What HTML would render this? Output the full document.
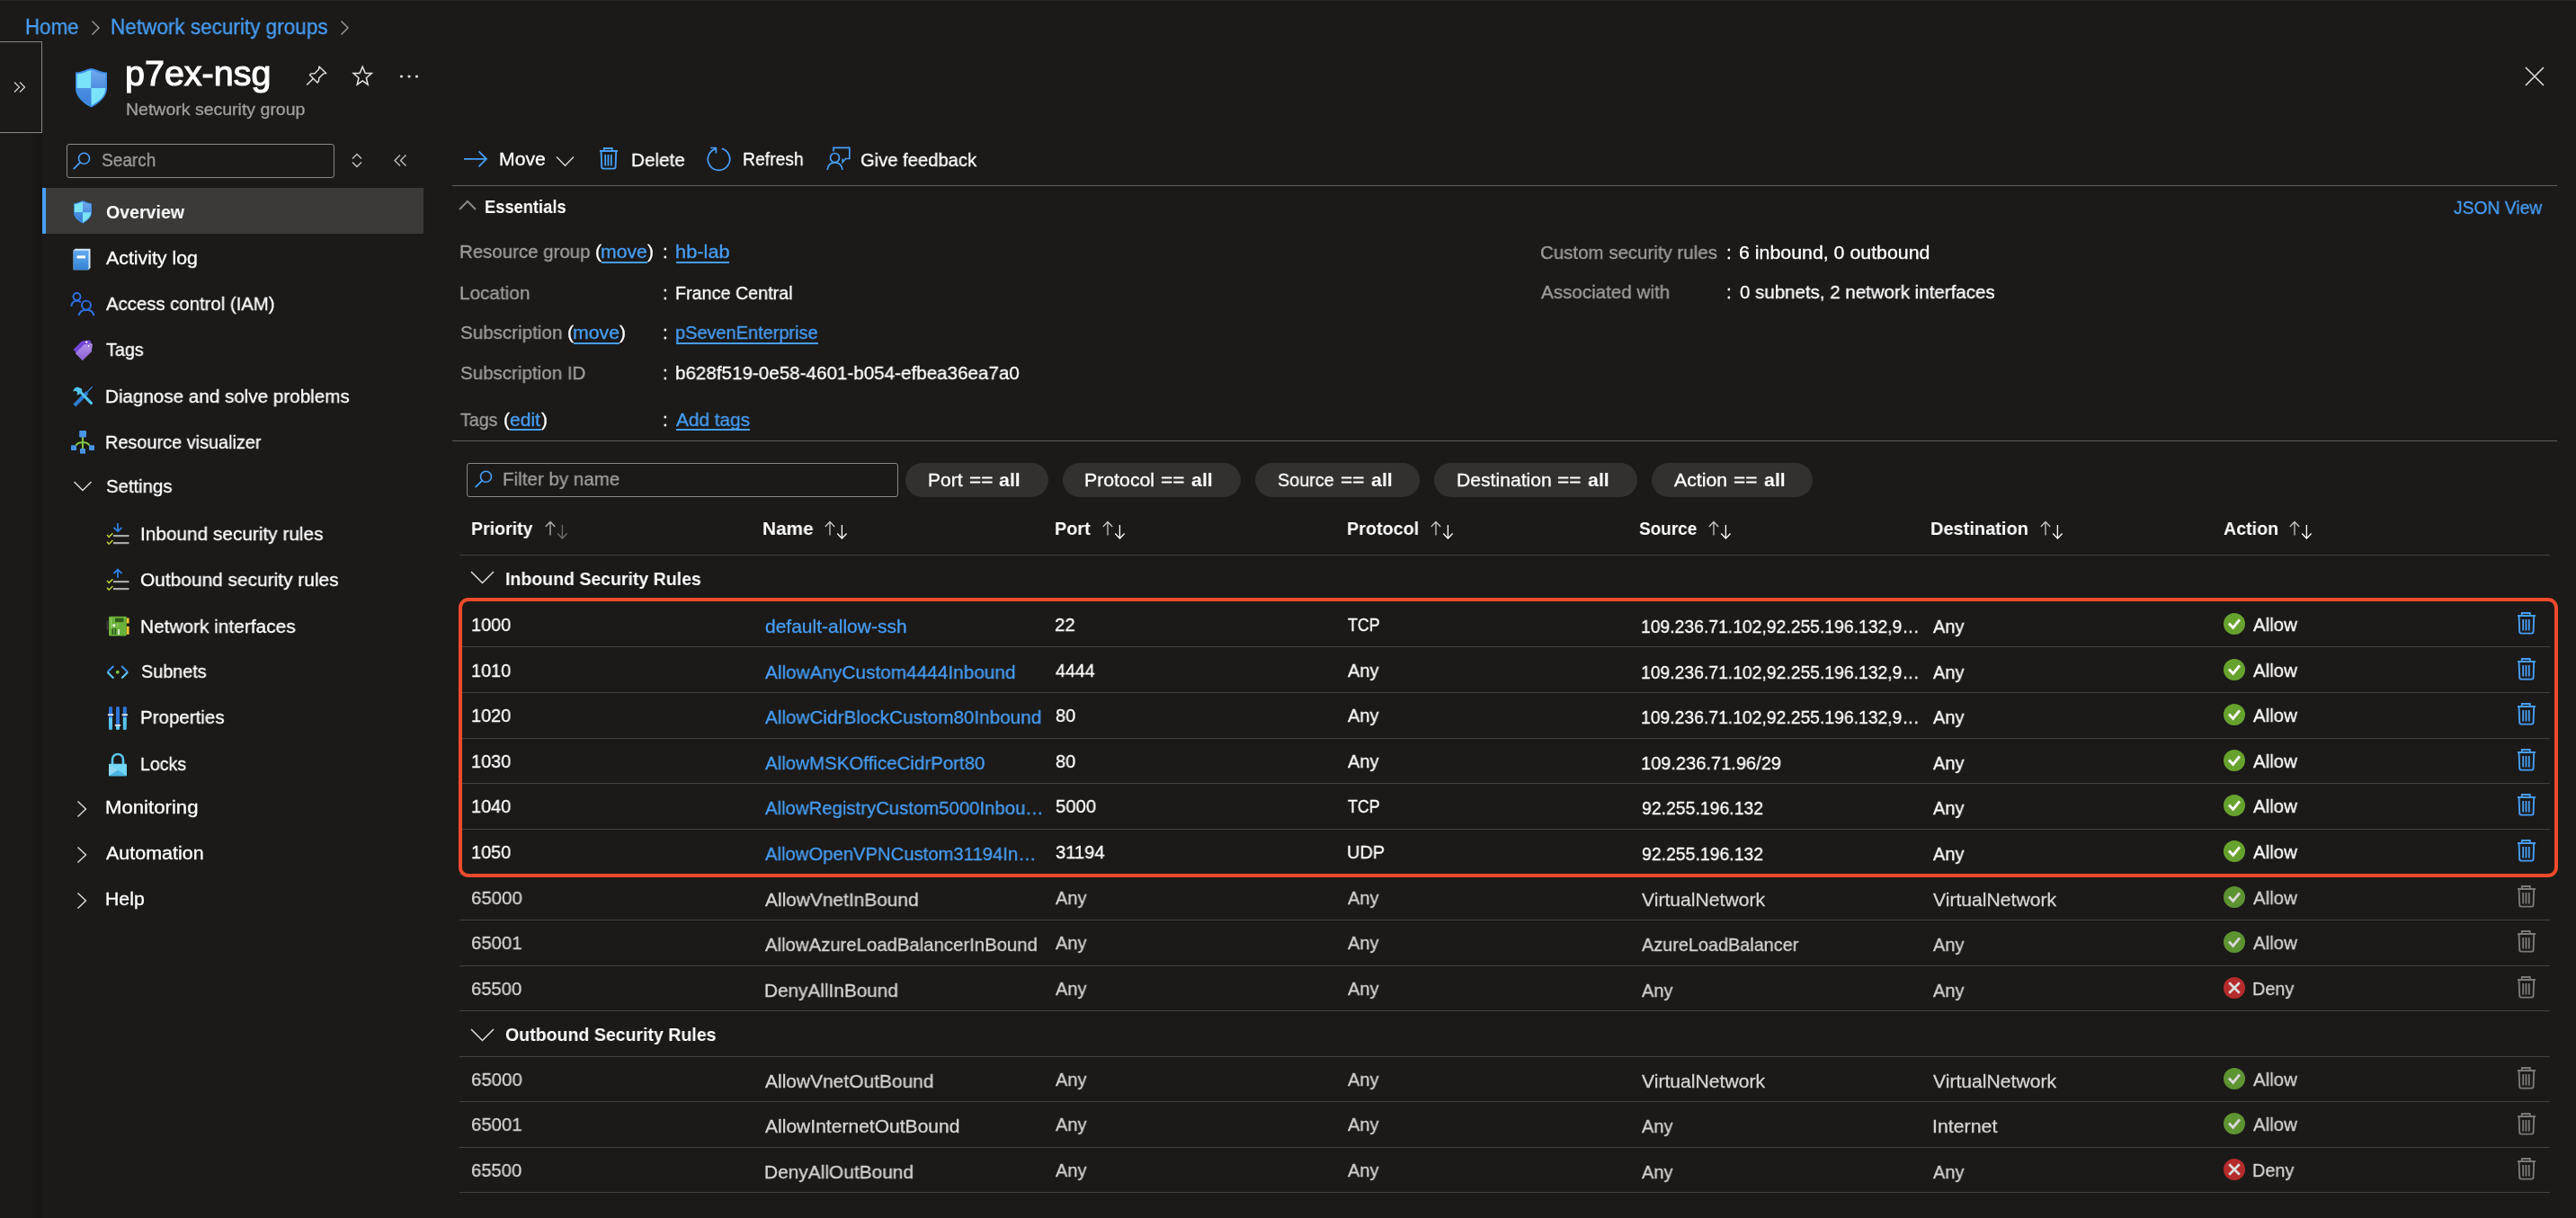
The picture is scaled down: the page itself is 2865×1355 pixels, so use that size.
<!DOCTYPE html>
<html><head><meta charset="utf-8"><style>
html,body{margin:0;padding:0;}
body{width:2865px;height:1355px;background:#1b1a19;overflow:hidden;position:relative;font-family:"Liberation Sans",sans-serif;}
.t{position:absolute;white-space:nowrap;line-height:1;transform-origin:0 0;will-change:transform;}
.t b{font-weight:700;}
.t{-webkit-text-stroke:0.3px currentColor;}
</style></head><body>
<div style="position:absolute;left:0px;top:0px;width:2865px;height:1px;background:#262524;"></div>
<div style="position:absolute;left:0px;top:148px;width:47px;height:1207px;background:linear-gradient(to right,#1b1a19 0px,#1b1a19 29px,#191817 37px,#161514 46px);"></div>
<div style="position:absolute;left:-2px;top:46px;width:47px;height:100px;border:1px solid #8a8886;"></div>
<svg style="position:absolute;left:14px;top:90px" width="16" height="14" viewBox="0 0 16 14"><path d="M2 1.5 L7.5 7 L2 12.5 M8 1.5 L13.5 7 L8 12.5" fill="none" stroke="#d2d0ce" stroke-width="1.3"/></svg>
<svg style="position:absolute;left:100px;top:22px" width="12" height="18" viewBox="0 0 12 18"><path d="M2.5 1.5 L10 9 L2.5 16.5" fill="none" stroke="#a19f9d" stroke-width="1.4"/></svg>
<svg style="position:absolute;left:377px;top:22px" width="12" height="18" viewBox="0 0 12 18"><path d="M2.5 1.5 L10 9 L2.5 16.5" fill="none" stroke="#a19f9d" stroke-width="1.4"/></svg>
<svg style="position:absolute;left:2806px;top:72px" width="26" height="26" viewBox="0 0 26 26"><path d="M3 3 L23 23 M23 3 L3 23" fill="none" stroke="#e1dfdd" stroke-width="1.6"/></svg>
<svg style="position:absolute;left:83px;top:74.5px" width="37" height="45.5" viewBox="0 0 37 45.5"><defs>
<linearGradient id="sgA" x1="0" y1="0" x2="0" y2="1"><stop offset="0" stop-color="#6fa8ee"/><stop offset="1" stop-color="#4f8fe0"/></linearGradient>
<linearGradient id="sgB" x1="0" y1="0" x2="0" y2="1"><stop offset="0" stop-color="#4a8fe2"/><stop offset="1" stop-color="#3a7fd6"/></linearGradient>
</defs>
<path d="M18.5 1 C14 1 11 5 1 5.5 L1 23 C1 33 10 40 18.5 44.5 C27 40 36 33 36 23 L36 5.5 C26 5 23 1 18.5 1 Z" fill="#3d8ee6"/>
<path d="M18.5 3 C14.5 3 11.5 6.8 2.6 7.3 L2.6 23 L18.5 23 Z" fill="#7ae3fa"/>
<path d="M18.5 3 C22.5 3 25.5 6.8 34.4 7.3 L34.4 23 L18.5 23 Z" fill="url(#sgA)"/>
<path d="M2.6 23 C2.8 32 10 38 18.5 42.6 L18.5 23 Z" fill="url(#sgB)"/>
<path d="M34.4 23 C34.2 32 27 38 18.5 42.6 L18.5 23 Z" fill="#7ae3fa"/></svg>
<svg style="position:absolute;left:338px;top:70px" width="28" height="28" viewBox="0 0 28 28"><path d="M6.4 13.3 L8.2 11.9 L11.8 11.9 L16.6 7.1 L16.9 4 L24.7 11.6 L21.7 11.9 L16.8 16.8 L16.4 20.3 L15 22 Z M10.3 17.5 L3.2 24.6" fill="none" stroke="#e8e6e4" stroke-width="1.4" stroke-linejoin="round"/></svg>
<svg style="position:absolute;left:388px;top:70px" width="30" height="28" viewBox="0 0 30 28"><path d="M15.2 4.2 L18.3 11.6 L25.3 11.6 L19.4 16.8 L21.2 24.2 L15.2 19.9 L9.2 24.2 L11 16.8 L5.1 11.6 L12.1 11.6 Z" fill="none" stroke="#e8e6e4" stroke-width="1.5" stroke-linejoin="miter"/></svg>
<svg style="position:absolute;left:443px;top:80px" width="24" height="10" viewBox="0 0 24 10"><circle cx="3.5" cy="5" r="1.6" fill="#e1dfdd"/><circle cx="12" cy="5" r="1.6" fill="#e1dfdd"/><circle cx="20.5" cy="5" r="1.6" fill="#e1dfdd"/></svg>
<div style="position:absolute;left:73.5px;top:159.5px;width:296px;height:36px;border:1.3px solid #8a8886;border-radius:3px;"></div>
<svg style="position:absolute;left:81px;top:168.5px" width="21" height="20" viewBox="0 0 21 20"><circle cx="12.5" cy="7.3" r="6" fill="none" stroke="#479ef5" stroke-width="1.6"/><path d="M8.2 11.6 L1.2 18.6" stroke="#479ef5" stroke-width="1.8" stroke-linecap="round"/></svg>
<svg style="position:absolute;left:390px;top:170px" width="14" height="17" viewBox="0 0 14 17"><path d="M2 6.5 L7 1.5 L12 6.5 M2 10.5 L7 15.5 L12 10.5" fill="none" stroke="#c8c6c4" stroke-width="1.3"/></svg>
<svg style="position:absolute;left:437px;top:171px" width="17" height="15" viewBox="0 0 17 15"><path d="M8 1.5 L2 7.5 L8 13.5 M14.5 1.5 L8.5 7.5 L14.5 13.5" fill="none" stroke="#c8c6c4" stroke-width="1.3"/></svg>
<div style="position:absolute;left:47px;top:209px;width:424px;height:51px;background:#3b3a39;"></div>
<div style="position:absolute;left:47px;top:209px;width:3.5px;height:51px;background:#479ef5;"></div>
<svg style="position:absolute;left:81px;top:222.5px" width="22" height="26" viewBox="0 0 37 45.5"><defs>
<linearGradient id="sgA" x1="0" y1="0" x2="0" y2="1"><stop offset="0" stop-color="#6fa8ee"/><stop offset="1" stop-color="#4f8fe0"/></linearGradient>
<linearGradient id="sgB" x1="0" y1="0" x2="0" y2="1"><stop offset="0" stop-color="#4a8fe2"/><stop offset="1" stop-color="#3a7fd6"/></linearGradient>
</defs>
<path d="M18.5 1 C14 1 11 5 1 5.5 L1 23 C1 33 10 40 18.5 44.5 C27 40 36 33 36 23 L36 5.5 C26 5 23 1 18.5 1 Z" fill="#3d8ee6"/>
<path d="M18.5 3 C14.5 3 11.5 6.8 2.6 7.3 L2.6 23 L18.5 23 Z" fill="#7ae3fa"/>
<path d="M18.5 3 C22.5 3 25.5 6.8 34.4 7.3 L34.4 23 L18.5 23 Z" fill="url(#sgA)"/>
<path d="M2.6 23 C2.8 32 10 38 18.5 42.6 L18.5 23 Z" fill="url(#sgB)"/>
<path d="M34.4 23 C34.2 32 27 38 18.5 42.6 L18.5 23 Z" fill="#7ae3fa"/></svg>
<svg style="position:absolute;left:81px;top:275.5px" width="22" height="25" viewBox="0 0 22 25"><defs><linearGradient id="alg" x1="0" y1="0" x2="0" y2="1"><stop offset="0" stop-color="#62aaf0"/><stop offset="1" stop-color="#3383d6"/></linearGradient></defs>
<path d="M2.5 0.8 L19.5 0.8 L19.5 22 L17.5 24.2 L0.6 24.2 L0.6 2.7 Z" fill="#d9ecfb"/>
<path d="M0.6 2.7 L17.5 2.7 L17.5 24.2 L0.6 24.2 Z" fill="url(#alg)"/>
<rect x="4.6" y="8.4" width="9.4" height="3" fill="#ffffff"/></svg>
<svg style="position:absolute;left:78px;top:325px" width="28" height="28" viewBox="0 0 28 28"><g fill="none" stroke="#2f72e4" stroke-width="1.9">
<circle cx="7.5" cy="5" r="4"/><path d="M1.2 16 C1.8 11.5 4.4 9.6 7.5 9.6 C9.6 9.6 11 10.4 12 11.4"/>
<circle cx="18" cy="14.6" r="5"/><path d="M9.6 26.2 C10.4 21.6 13.6 19.8 18 19.8 C22.4 19.8 25.6 21.6 26.4 26.2"/></g></svg>
<svg style="position:absolute;left:80px;top:377px" width="24" height="26" viewBox="0 0 24 26"><path d="M1.5 12 L11 2.5 L19.5 1.2 L21.5 3.2 L20.5 10 L10 20.5 Z" fill="#7145d6"/>
<path d="M4 16 L13.8 6.2 L21.8 5.2 L22.6 6 L21.8 14 L12 23.8 L11.6 24 Z" fill="#a07be2"/>
<path d="M4 16 L13.8 6.2 L21.8 5.2 L22.6 6 L21.8 14 L12 23.8 Z" fill="url(#tgg)"/>
<defs><linearGradient id="tgg" x1="0" y1="0" x2="0" y2="1"><stop offset="0" stop-color="#b393ea"/><stop offset="1" stop-color="#8a5fd4"/></linearGradient></defs>
<circle cx="16.2" cy="3.6" r="1.5" fill="#fff" stroke="#5a35b8" stroke-width="0.6"/><circle cx="18.5" cy="8" r="1.5" fill="#fff" stroke="#5a35b8" stroke-width="0.6"/></svg>
<svg style="position:absolute;left:80px;top:429px" width="24" height="24" viewBox="0 0 24 24"><path d="M3 20.5 L15.5 8 L16.8 9.3 L4.3 21.8 Z" fill="#2f7dd0" stroke="#2f7dd0" stroke-width="2.4" stroke-linecap="round"/>
<path d="M16 8.2 L22.8 1.2" stroke="#3b8ee0" stroke-width="1.2"/>
<path d="M6.5 1.5 C3.8 1.6 1.6 3.8 1.5 6.5 L4.2 5.8 L6.2 7.8 L5.5 10.5 C7 10.4 8.2 9.7 9 8.8 L20.2 20.6 C20.9 21.3 22 21.3 22.6 20.6 C23.3 19.9 23.3 18.9 22.6 18.2 L11.2 6.8 C11.5 5.8 11.4 4.5 10.8 3.6 Z" fill="#50c3ea"/></svg>
<svg style="position:absolute;left:78px;top:478px" width="28" height="28" viewBox="0 0 28 28"><path d="M14 8 L14 21.5 M6.5 17.5 C8 15 10 14 14 14 C18 14 20 15 21.5 17.5" fill="none" stroke="#86c440" stroke-width="2"/>
<rect x="10.2" y="1" width="7.8" height="7.6" rx="1" fill="#4a94e6"/><rect x="1" y="17.2" width="6" height="5.8" rx="0.8" fill="#4a94e6"/>
<rect x="11" y="21" width="6" height="5.8" rx="0.8" fill="#4a94e6"/><rect x="21" y="17.2" width="6" height="5.8" rx="0.8" fill="#4a94e6"/></svg>
<svg style="position:absolute;left:81px;top:534px" width="22" height="14" viewBox="0 0 22 14"><path d="M1.5 2 L11 11.5 L20.5 2" fill="none" stroke="#e1dfdd" stroke-width="1.4"/></svg>
<svg style="position:absolute;left:117.5px;top:581px" width="27" height="27" viewBox="0 0 27 27"><path d="M1 14 L3.2 16.4 L7.4 12.2 M1 21.8 L3.2 24.2 L7.4 20" fill="none" stroke="#c3d137" stroke-width="1.5"/>
<rect x="8" y="14" width="17.5" height="2.2" fill="#a8a8a8"/><rect x="8" y="22" width="17.5" height="2.2" fill="#a8a8a8"/><path d="M13 1 L13 10 M8.5 5.8 L13 10.2 L17.5 5.8" fill="none" stroke="#2f7fe0" stroke-width="1.8"/></svg>
<svg style="position:absolute;left:117.5px;top:632px" width="27" height="27" viewBox="0 0 27 27"><path d="M1 14 L3.2 16.4 L7.4 12.2 M1 21.8 L3.2 24.2 L7.4 20" fill="none" stroke="#c3d137" stroke-width="1.5"/>
<rect x="8" y="14" width="17.5" height="2.2" fill="#a8a8a8"/><rect x="8" y="22" width="17.5" height="2.2" fill="#a8a8a8"/><path d="M13 10.8 L13 1.8 M8.5 6 L13 1.5 L17.5 6" fill="none" stroke="#2f7fe0" stroke-width="1.8"/></svg>
<svg style="position:absolute;left:118px;top:685px" width="26" height="24" viewBox="0 0 26 24"><rect x="0.5" y="5.5" width="2" height="10" fill="#3a3a3a"/>
<rect x="3" y="0.8" width="19.8" height="21.6" rx="1.3" fill="#6bb23c"/>
<rect x="10" y="2.6" width="9.5" height="4.5" fill="#2f5e1c"/>
<path d="M5.5 3 L5.5 13 L8 15.5 M13 8 L13 12" stroke="#a9db6e" stroke-width="0.9" fill="none"/>
<circle cx="8.8" cy="10.8" r="1.7" fill="#e8f5d8"/>
<rect x="6.5" y="14" width="1.8" height="7" fill="#2f5e1c"/><rect x="9.5" y="14" width="1.8" height="7" fill="#2f5e1c"/>
<rect x="13.3" y="15" width="1.6" height="6" fill="#f0f0f0"/>
<rect x="22.8" y="2.5" width="2.8" height="6" fill="#f2c230"/><rect x="22.8" y="11.8" width="2.8" height="9" fill="#f2c230"/></svg>
<svg style="position:absolute;left:118px;top:740px" width="26" height="16" viewBox="0 0 26 16"><path d="M8.3 1 L1.5 7.8" stroke="#3b8fe6" stroke-width="2.1" fill="none"/><path d="M1.5 7.8 L8.3 14.6" stroke="#5ccaf2" stroke-width="2.1" fill="none"/>
<path d="M17.3 1 L24.1 7.8" stroke="#3b8fe6" stroke-width="2.1" fill="none"/><path d="M24.1 7.8 L17.3 14.6" stroke="#5ccaf2" stroke-width="2.1" fill="none"/>
<circle cx="12.8" cy="7.8" r="2" fill="#7bc142"/></svg>
<svg style="position:absolute;left:119px;top:785px" width="24" height="28" viewBox="0 0 24 28"><defs><linearGradient id="pbg" x1="0" y1="0" x2="0" y2="1"><stop offset="0" stop-color="#2e74d6"/><stop offset="0.45" stop-color="#2e74d6"/><stop offset="0.5" stop-color="#62cdf4"/><stop offset="1" stop-color="#4db8e8"/></linearGradient>
<linearGradient id="pbg2" x1="0" y1="0" x2="0" y2="1"><stop offset="0" stop-color="#2e74d6"/><stop offset="0.82" stop-color="#2e74d6"/><stop offset="0.86" stop-color="#62cdf4"/><stop offset="1" stop-color="#4db8e8"/></linearGradient></defs>
<rect x="2" y="1" width="4" height="26" rx="1.5" fill="url(#pbg)"/><rect x="10" y="1" width="4" height="26" rx="1.5" fill="url(#pbg2)"/><rect x="17.8" y="1" width="4" height="26" rx="1.5" fill="url(#pbg)"/>
<rect x="0.8" y="9.3" width="6.4" height="1.8" fill="#e6e6e6"/><rect x="16.6" y="9.3" width="6.4" height="1.8" fill="#e6e6e6"/><rect x="8.8" y="21" width="6.4" height="1.8" fill="#e6e6e6"/></svg>
<svg style="position:absolute;left:120px;top:837px" width="22" height="27" viewBox="0 0 22 27"><path d="M5 13 L5 8 C5 4.2 7.6 2 11 2 C14.4 2 17 4.2 17 8 L17 13" fill="none" stroke="#5bc6ee" stroke-width="2.6"/>
<rect x="1" y="12.8" width="20" height="13.4" rx="1" fill="#72d6f5"/>
<path d="M1 26.2 L11 19.5 L21 26.2 Z" fill="#4bb4e2"/><path d="M1 12.8 L11 19.5 L1 26.2 Z" fill="#8ed7f0"/></svg>
<svg style="position:absolute;left:84px;top:890px" width="14" height="20" viewBox="0 0 14 20"><path d="M2.5 1.5 L11.5 10 L2.5 18.5" fill="none" stroke="#e1dfdd" stroke-width="1.4"/></svg>
<svg style="position:absolute;left:84px;top:941px" width="14" height="20" viewBox="0 0 14 20"><path d="M2.5 1.5 L11.5 10 L2.5 18.5" fill="none" stroke="#e1dfdd" stroke-width="1.4"/></svg>
<svg style="position:absolute;left:84px;top:992px" width="14" height="20" viewBox="0 0 14 20"><path d="M2.5 1.5 L11.5 10 L2.5 18.5" fill="none" stroke="#e1dfdd" stroke-width="1.4"/></svg>
<svg style="position:absolute;left:514px;top:166px" width="30" height="22" viewBox="0 0 30 22"><path d="M2 10.8 L27 10.8 M18.5 2.3 L27 10.8 L18.5 19.3" fill="none" stroke="#479ef5" stroke-width="1.8"/></svg>
<svg style="position:absolute;left:617px;top:172px" width="24" height="15" viewBox="0 0 24 15"><path d="M2 2.5 L11.5 12.3 L21 2.5" fill="none" stroke="#e1dfdd" stroke-width="1.3"/></svg>
<svg style="position:absolute;left:666px;top:164px" width="22" height="26" viewBox="0 0 22 26"><path d="M1 4 L21 4 M5.8 3.2 L5.8 1 L14.8 1 L14.8 3.2" fill="none" stroke="#479ef5" stroke-width="1.8"/><path d="M2.6 4.2 L3.2 21.5 C3.2 22.8 4 23.6 5.2 23.6 L16.6 23.6 C17.8 23.6 18.6 22.8 18.6 21.5 L19.2 4.2" fill="none" stroke="#479ef5" stroke-width="1.9"/><path d="M7.2 8 L7.2 20.5 M10.5 8 L10.5 20.5 M13.8 8 L13.8 20.5" stroke="#479ef5" stroke-width="1.8"/></svg>
<svg style="position:absolute;left:785px;top:162px" width="30" height="30" viewBox="0 0 30 30"><path d="M17.8 3.4 A12.2 12.2 0 1 1 11.6 3.3" fill="none" stroke="#479ef5" stroke-width="1.7"/><path d="M5.2 2.5 L11.4 2.5 L11.4 8.6" fill="none" stroke="#479ef5" stroke-width="1.7"/></svg>
<svg style="position:absolute;left:918px;top:163px" width="30" height="28" viewBox="0 0 30 28"><circle cx="10.5" cy="12.5" r="5" fill="none" stroke="#479ef5" stroke-width="1.7"/><path d="M2.2 26 C2.8 20.5 6 17.8 10.5 17.8 C15 17.8 18.2 20.5 19 26" fill="none" stroke="#479ef5" stroke-width="1.7"/><path d="M9 5.5 L9 1.3 L26.8 1.3 L26.8 13.5 L22.5 13.5 L19.2 17.5 L19.2 13.8" fill="none" stroke="#479ef5" stroke-width="1.7"/></svg>
<div style="position:absolute;left:503px;top:206px;width:2341px;height:1.3px;background:#5f5e5d;"></div>
<svg style="position:absolute;left:509px;top:221px" width="24" height="14" viewBox="0 0 24 14"><path d="M2 12 L11 3 L20 12" fill="none" stroke="#8a8886" stroke-width="2"/></svg>
<div style="position:absolute;left:669px;top:290.5px;width:51px;height:2px;background:#479ef5;"></div>
<div style="position:absolute;left:751.5px;top:290.5px;width:59.5px;height:2px;background:#479ef5;"></div>
<div style="position:absolute;left:638px;top:380.5px;width:51px;height:2px;background:#479ef5;"></div>
<div style="position:absolute;left:752px;top:380.5px;width:157.5px;height:2px;background:#479ef5;"></div>
<div style="position:absolute;left:567px;top:477.2px;width:35px;height:2px;background:#479ef5;"></div>
<div style="position:absolute;left:751.5px;top:477.2px;width:82px;height:2px;background:#479ef5;"></div>
<div style="position:absolute;left:503px;top:490px;width:2341px;height:1.3px;background:#5f5e5d;"></div>
<div style="position:absolute;left:519px;top:515px;width:478px;height:36px;border:1.3px solid #8a8886;border-radius:3px;"></div>
<svg style="position:absolute;left:528px;top:523px" width="21" height="21" viewBox="0 0 21 21"><circle cx="12.5" cy="7.3" r="6" fill="none" stroke="#479ef5" stroke-width="1.6"/><path d="M8.2 11.6 L1.2 18.6" stroke="#479ef5" stroke-width="1.8" stroke-linecap="round"/></svg>
<div style="position:absolute;left:1007px;top:515px;width:159px;height:38px;border-radius:19px;background:#323130;"></div>
<div style="position:absolute;left:1182.2px;top:515px;width:198.0px;height:38px;border-radius:19px;background:#323130;"></div>
<div style="position:absolute;left:1396px;top:515px;width:183px;height:38px;border-radius:19px;background:#323130;"></div>
<div style="position:absolute;left:1595px;top:515px;width:226px;height:38px;border-radius:19px;background:#323130;"></div>
<div style="position:absolute;left:1837px;top:515px;width:179px;height:38px;border-radius:19px;background:#323130;"></div>
<svg style="position:absolute;left:605.8px;top:579px" width="28" height="22" viewBox="0 0 28 22"><path d="M6 16.5 L6 1.5 M0.8 7 L6 1.5 L11.2 7" fill="none" stroke="#b8b6b4" stroke-width="1.3"/><path d="M19.4 5 L19.4 20 M14.2 14.5 L19.4 20 L24.6 14.5" fill="none" stroke="#6e6d6c" stroke-width="1.3"/></svg>
<svg style="position:absolute;left:917.4px;top:579px" width="28" height="22" viewBox="0 0 28 22"><path d="M6 16.5 L6 1.5 M0.8 7 L6 1.5 L11.2 7" fill="none" stroke="#c8c6c4" stroke-width="1.3"/><path d="M19.4 5 L19.4 20 M14.2 14.5 L19.4 20 L24.6 14.5" fill="none" stroke="#ffffff" stroke-width="1.3"/></svg>
<svg style="position:absolute;left:1225.9px;top:579px" width="28" height="22" viewBox="0 0 28 22"><path d="M6 16.5 L6 1.5 M0.8 7 L6 1.5 L11.2 7" fill="none" stroke="#c8c6c4" stroke-width="1.3"/><path d="M19.4 5 L19.4 20 M14.2 14.5 L19.4 20 L24.6 14.5" fill="none" stroke="#ffffff" stroke-width="1.3"/></svg>
<svg style="position:absolute;left:1590.5px;top:579px" width="28" height="22" viewBox="0 0 28 22"><path d="M6 16.5 L6 1.5 M0.8 7 L6 1.5 L11.2 7" fill="none" stroke="#c8c6c4" stroke-width="1.3"/><path d="M19.4 5 L19.4 20 M14.2 14.5 L19.4 20 L24.6 14.5" fill="none" stroke="#ffffff" stroke-width="1.3"/></svg>
<svg style="position:absolute;left:1900.2px;top:579px" width="28" height="22" viewBox="0 0 28 22"><path d="M6 16.5 L6 1.5 M0.8 7 L6 1.5 L11.2 7" fill="none" stroke="#c8c6c4" stroke-width="1.3"/><path d="M19.4 5 L19.4 20 M14.2 14.5 L19.4 20 L24.6 14.5" fill="none" stroke="#ffffff" stroke-width="1.3"/></svg>
<svg style="position:absolute;left:2268.6px;top:579px" width="28" height="22" viewBox="0 0 28 22"><path d="M6 16.5 L6 1.5 M0.8 7 L6 1.5 L11.2 7" fill="none" stroke="#c8c6c4" stroke-width="1.3"/><path d="M19.4 5 L19.4 20 M14.2 14.5 L19.4 20 L24.6 14.5" fill="none" stroke="#ffffff" stroke-width="1.3"/></svg>
<svg style="position:absolute;left:2546.4px;top:579px" width="28" height="22" viewBox="0 0 28 22"><path d="M6 16.5 L6 1.5 M0.8 7 L6 1.5 L11.2 7" fill="none" stroke="#c8c6c4" stroke-width="1.3"/><path d="M19.4 5 L19.4 20 M14.2 14.5 L19.4 20 L24.6 14.5" fill="none" stroke="#ffffff" stroke-width="1.3"/></svg>
<div style="position:absolute;left:511px;top:617px;width:2325px;height:1px;background:#434241;"></div>
<svg style="position:absolute;left:522px;top:634px" width="30" height="18" viewBox="0 0 30 18"><path d="M2 2 L14.5 14.5 L27 2" fill="none" stroke="#e1dfdd" stroke-width="1.5"/></svg>
<svg style="position:absolute;left:2473px;top:682.0px" width="24" height="24" viewBox="0 0 24 24"><circle cx="12" cy="12" r="12" fill="#68a22e"/><path d="M6 11.6 L10.6 16.4 L17.9 7.4" fill="none" stroke="#ffffff" stroke-width="2.9"/></svg>
<svg style="position:absolute;left:2799px;top:681.1px" width="22" height="26" viewBox="0 0 22 26"><path d="M1 4 L21 4 M5.8 3.2 L5.8 1 L14.8 1 L14.8 3.2" fill="none" stroke="#479ef5" stroke-width="1.8"/><path d="M2.6 4.2 L3.2 21.5 C3.2 22.8 4 23.6 5.2 23.6 L16.6 23.6 C17.8 23.6 18.6 22.8 18.6 21.5 L19.2 4.2" fill="none" stroke="#479ef5" stroke-width="1.9"/><path d="M7.2 8 L7.2 20.5 M10.5 8 L10.5 20.5 M13.8 8 L13.8 20.5" stroke="#479ef5" stroke-width="1.8"/></svg>
<div style="position:absolute;left:513px;top:719px;width:2323px;height:1px;background:#434241;"></div>
<svg style="position:absolute;left:2473px;top:732.6px" width="24" height="24" viewBox="0 0 24 24"><circle cx="12" cy="12" r="12" fill="#68a22e"/><path d="M6 11.6 L10.6 16.4 L17.9 7.4" fill="none" stroke="#ffffff" stroke-width="2.9"/></svg>
<svg style="position:absolute;left:2799px;top:731.7px" width="22" height="26" viewBox="0 0 22 26"><path d="M1 4 L21 4 M5.8 3.2 L5.8 1 L14.8 1 L14.8 3.2" fill="none" stroke="#479ef5" stroke-width="1.8"/><path d="M2.6 4.2 L3.2 21.5 C3.2 22.8 4 23.6 5.2 23.6 L16.6 23.6 C17.8 23.6 18.6 22.8 18.6 21.5 L19.2 4.2" fill="none" stroke="#479ef5" stroke-width="1.9"/><path d="M7.2 8 L7.2 20.5 M10.5 8 L10.5 20.5 M13.8 8 L13.8 20.5" stroke="#479ef5" stroke-width="1.8"/></svg>
<div style="position:absolute;left:513px;top:770px;width:2323px;height:1px;background:#434241;"></div>
<svg style="position:absolute;left:2473px;top:783.2px" width="24" height="24" viewBox="0 0 24 24"><circle cx="12" cy="12" r="12" fill="#68a22e"/><path d="M6 11.6 L10.6 16.4 L17.9 7.4" fill="none" stroke="#ffffff" stroke-width="2.9"/></svg>
<svg style="position:absolute;left:2799px;top:782.3px" width="22" height="26" viewBox="0 0 22 26"><path d="M1 4 L21 4 M5.8 3.2 L5.8 1 L14.8 1 L14.8 3.2" fill="none" stroke="#479ef5" stroke-width="1.8"/><path d="M2.6 4.2 L3.2 21.5 C3.2 22.8 4 23.6 5.2 23.6 L16.6 23.6 C17.8 23.6 18.6 22.8 18.6 21.5 L19.2 4.2" fill="none" stroke="#479ef5" stroke-width="1.9"/><path d="M7.2 8 L7.2 20.5 M10.5 8 L10.5 20.5 M13.8 8 L13.8 20.5" stroke="#479ef5" stroke-width="1.8"/></svg>
<div style="position:absolute;left:513px;top:821px;width:2323px;height:1px;background:#434241;"></div>
<svg style="position:absolute;left:2473px;top:833.7px" width="24" height="24" viewBox="0 0 24 24"><circle cx="12" cy="12" r="12" fill="#68a22e"/><path d="M6 11.6 L10.6 16.4 L17.9 7.4" fill="none" stroke="#ffffff" stroke-width="2.9"/></svg>
<svg style="position:absolute;left:2799px;top:832.8px" width="22" height="26" viewBox="0 0 22 26"><path d="M1 4 L21 4 M5.8 3.2 L5.8 1 L14.8 1 L14.8 3.2" fill="none" stroke="#479ef5" stroke-width="1.8"/><path d="M2.6 4.2 L3.2 21.5 C3.2 22.8 4 23.6 5.2 23.6 L16.6 23.6 C17.8 23.6 18.6 22.8 18.6 21.5 L19.2 4.2" fill="none" stroke="#479ef5" stroke-width="1.9"/><path d="M7.2 8 L7.2 20.5 M10.5 8 L10.5 20.5 M13.8 8 L13.8 20.5" stroke="#479ef5" stroke-width="1.8"/></svg>
<div style="position:absolute;left:513px;top:871px;width:2323px;height:1px;background:#434241;"></div>
<svg style="position:absolute;left:2473px;top:884.3px" width="24" height="24" viewBox="0 0 24 24"><circle cx="12" cy="12" r="12" fill="#68a22e"/><path d="M6 11.6 L10.6 16.4 L17.9 7.4" fill="none" stroke="#ffffff" stroke-width="2.9"/></svg>
<svg style="position:absolute;left:2799px;top:883.4px" width="22" height="26" viewBox="0 0 22 26"><path d="M1 4 L21 4 M5.8 3.2 L5.8 1 L14.8 1 L14.8 3.2" fill="none" stroke="#479ef5" stroke-width="1.8"/><path d="M2.6 4.2 L3.2 21.5 C3.2 22.8 4 23.6 5.2 23.6 L16.6 23.6 C17.8 23.6 18.6 22.8 18.6 21.5 L19.2 4.2" fill="none" stroke="#479ef5" stroke-width="1.9"/><path d="M7.2 8 L7.2 20.5 M10.5 8 L10.5 20.5 M13.8 8 L13.8 20.5" stroke="#479ef5" stroke-width="1.8"/></svg>
<div style="position:absolute;left:513px;top:922px;width:2323px;height:1px;background:#434241;"></div>
<svg style="position:absolute;left:2473px;top:934.9px" width="24" height="24" viewBox="0 0 24 24"><circle cx="12" cy="12" r="12" fill="#68a22e"/><path d="M6 11.6 L10.6 16.4 L17.9 7.4" fill="none" stroke="#ffffff" stroke-width="2.9"/></svg>
<svg style="position:absolute;left:2799px;top:934.0px" width="22" height="26" viewBox="0 0 22 26"><path d="M1 4 L21 4 M5.8 3.2 L5.8 1 L14.8 1 L14.8 3.2" fill="none" stroke="#479ef5" stroke-width="1.8"/><path d="M2.6 4.2 L3.2 21.5 C3.2 22.8 4 23.6 5.2 23.6 L16.6 23.6 C17.8 23.6 18.6 22.8 18.6 21.5 L19.2 4.2" fill="none" stroke="#479ef5" stroke-width="1.9"/><path d="M7.2 8 L7.2 20.5 M10.5 8 L10.5 20.5 M13.8 8 L13.8 20.5" stroke="#479ef5" stroke-width="1.8"/></svg>
<div style="position:absolute;left:511px;top:972px;width:2325px;height:1px;background:#434241;"></div>
<svg style="position:absolute;left:2473px;top:985.5px" width="24" height="24" viewBox="0 0 24 24"><circle cx="12" cy="12" r="12" fill="#5e9332"/><path d="M6 11.6 L10.6 16.4 L17.9 7.4" fill="none" stroke="#d8d8d8" stroke-width="2.9"/></svg>
<svg style="position:absolute;left:2799px;top:984.6px" width="22" height="26" viewBox="0 0 22 26"><path d="M1 4 L21 4 M5.8 3.2 L5.8 1 L14.8 1 L14.8 3.2" fill="none" stroke="#7a7978" stroke-width="1.8"/><path d="M2.6 4.2 L3.2 21.5 C3.2 22.8 4 23.6 5.2 23.6 L16.6 23.6 C17.8 23.6 18.6 22.8 18.6 21.5 L19.2 4.2" fill="none" stroke="#7a7978" stroke-width="1.9"/><path d="M7.2 8 L7.2 20.5 M10.5 8 L10.5 20.5 M13.8 8 L13.8 20.5" stroke="#7a7978" stroke-width="1.8"/></svg>
<div style="position:absolute;left:511px;top:1023px;width:2325px;height:1px;background:#434241;"></div>
<svg style="position:absolute;left:2473px;top:1036.1px" width="24" height="24" viewBox="0 0 24 24"><circle cx="12" cy="12" r="12" fill="#5e9332"/><path d="M6 11.6 L10.6 16.4 L17.9 7.4" fill="none" stroke="#d8d8d8" stroke-width="2.9"/></svg>
<svg style="position:absolute;left:2799px;top:1035.2px" width="22" height="26" viewBox="0 0 22 26"><path d="M1 4 L21 4 M5.8 3.2 L5.8 1 L14.8 1 L14.8 3.2" fill="none" stroke="#7a7978" stroke-width="1.8"/><path d="M2.6 4.2 L3.2 21.5 C3.2 22.8 4 23.6 5.2 23.6 L16.6 23.6 C17.8 23.6 18.6 22.8 18.6 21.5 L19.2 4.2" fill="none" stroke="#7a7978" stroke-width="1.9"/><path d="M7.2 8 L7.2 20.5 M10.5 8 L10.5 20.5 M13.8 8 L13.8 20.5" stroke="#7a7978" stroke-width="1.8"/></svg>
<div style="position:absolute;left:511px;top:1074px;width:2325px;height:1px;background:#434241;"></div>
<svg style="position:absolute;left:2473px;top:1086.6px" width="24" height="24" viewBox="0 0 24 24"><circle cx="12" cy="12" r="12" fill="#b52b2b"/><path d="M6.2 6.2 L17.8 17.8 M17.8 6.2 L6.2 17.8" fill="none" stroke="#dcdcdc" stroke-width="2.7"/></svg>
<svg style="position:absolute;left:2799px;top:1085.7px" width="22" height="26" viewBox="0 0 22 26"><path d="M1 4 L21 4 M5.8 3.2 L5.8 1 L14.8 1 L14.8 3.2" fill="none" stroke="#7a7978" stroke-width="1.8"/><path d="M2.6 4.2 L3.2 21.5 C3.2 22.8 4 23.6 5.2 23.6 L16.6 23.6 C17.8 23.6 18.6 22.8 18.6 21.5 L19.2 4.2" fill="none" stroke="#7a7978" stroke-width="1.9"/><path d="M7.2 8 L7.2 20.5 M10.5 8 L10.5 20.5 M13.8 8 L13.8 20.5" stroke="#7a7978" stroke-width="1.8"/></svg>
<div style="position:absolute;left:511px;top:1124px;width:2325px;height:1px;background:#434241;"></div>
<svg style="position:absolute;left:522px;top:1143.1px" width="30" height="18" viewBox="0 0 30 18"><path d="M2 2 L14.5 14.5 L27 2" fill="none" stroke="#e1dfdd" stroke-width="1.5"/></svg>
<div style="position:absolute;left:511px;top:1175px;width:2325px;height:1px;background:#434241;"></div>
<svg style="position:absolute;left:2473px;top:1187.8px" width="24" height="24" viewBox="0 0 24 24"><circle cx="12" cy="12" r="12" fill="#5e9332"/><path d="M6 11.6 L10.6 16.4 L17.9 7.4" fill="none" stroke="#d8d8d8" stroke-width="2.9"/></svg>
<svg style="position:absolute;left:2799px;top:1186.9px" width="22" height="26" viewBox="0 0 22 26"><path d="M1 4 L21 4 M5.8 3.2 L5.8 1 L14.8 1 L14.8 3.2" fill="none" stroke="#7a7978" stroke-width="1.8"/><path d="M2.6 4.2 L3.2 21.5 C3.2 22.8 4 23.6 5.2 23.6 L16.6 23.6 C17.8 23.6 18.6 22.8 18.6 21.5 L19.2 4.2" fill="none" stroke="#7a7978" stroke-width="1.9"/><path d="M7.2 8 L7.2 20.5 M10.5 8 L10.5 20.5 M13.8 8 L13.8 20.5" stroke="#7a7978" stroke-width="1.8"/></svg>
<div style="position:absolute;left:511px;top:1225px;width:2325px;height:1px;background:#434241;"></div>
<svg style="position:absolute;left:2473px;top:1238.4px" width="24" height="24" viewBox="0 0 24 24"><circle cx="12" cy="12" r="12" fill="#5e9332"/><path d="M6 11.6 L10.6 16.4 L17.9 7.4" fill="none" stroke="#d8d8d8" stroke-width="2.9"/></svg>
<svg style="position:absolute;left:2799px;top:1237.5px" width="22" height="26" viewBox="0 0 22 26"><path d="M1 4 L21 4 M5.8 3.2 L5.8 1 L14.8 1 L14.8 3.2" fill="none" stroke="#7a7978" stroke-width="1.8"/><path d="M2.6 4.2 L3.2 21.5 C3.2 22.8 4 23.6 5.2 23.6 L16.6 23.6 C17.8 23.6 18.6 22.8 18.6 21.5 L19.2 4.2" fill="none" stroke="#7a7978" stroke-width="1.9"/><path d="M7.2 8 L7.2 20.5 M10.5 8 L10.5 20.5 M13.8 8 L13.8 20.5" stroke="#7a7978" stroke-width="1.8"/></svg>
<div style="position:absolute;left:511px;top:1276px;width:2325px;height:1px;background:#434241;"></div>
<svg style="position:absolute;left:2473px;top:1289.0px" width="24" height="24" viewBox="0 0 24 24"><circle cx="12" cy="12" r="12" fill="#b52b2b"/><path d="M6.2 6.2 L17.8 17.8 M17.8 6.2 L6.2 17.8" fill="none" stroke="#dcdcdc" stroke-width="2.7"/></svg>
<svg style="position:absolute;left:2799px;top:1288.1px" width="22" height="26" viewBox="0 0 22 26"><path d="M1 4 L21 4 M5.8 3.2 L5.8 1 L14.8 1 L14.8 3.2" fill="none" stroke="#7a7978" stroke-width="1.8"/><path d="M2.6 4.2 L3.2 21.5 C3.2 22.8 4 23.6 5.2 23.6 L16.6 23.6 C17.8 23.6 18.6 22.8 18.6 21.5 L19.2 4.2" fill="none" stroke="#7a7978" stroke-width="1.9"/><path d="M7.2 8 L7.2 20.5 M10.5 8 L10.5 20.5 M13.8 8 L13.8 20.5" stroke="#7a7978" stroke-width="1.8"/></svg>
<div style="position:absolute;left:511px;top:1326px;width:2325px;height:1px;background:#434241;"></div>
<div style="position:absolute;left:509.5px;top:665px;width:2327px;height:303px;border:4px solid #ee4a2c;border-radius:11px;"></div>
<div class="t" style="left:28.33px;top:19.23px;font-size:23px;color:#479ef5;transform:scaleX(0.9704);">Home</div>
<div class="t" style="left:123.32px;top:19.23px;font-size:23px;color:#479ef5;transform:scaleX(0.9792);">Network security groups</div>
<div class="t" style="left:139.45px;top:62.51px;font-size:38.5px;color:#ffffff;-webkit-text-stroke:1.1px #fff;transform:scaleX(1.0255);">p7ex-nsg</div>
<div class="t" style="left:139.97px;top:111.92px;font-size:19px;color:#a19f9d;transform:scaleX(1.0263);">Network security group</div>
<div class="t" style="left:112.60px;top:166.92px;font-size:21px;color:#a19f9d;transform:scaleX(0.9080);">Search</div>
<div class="t" style="left:117.70px;top:224.52px;font-size:21px;color:#ffffff;font-weight:700;-webkit-text-stroke:0;transform:scaleX(0.9313);">Overview</div>
<div class="t" style="left:117.80px;top:275.62px;font-size:21px;color:#ffffff;transform:scaleX(1.0152);">Activity log</div>
<div class="t" style="left:118.00px;top:326.92px;font-size:21px;color:#ffffff;transform:scaleX(0.9678);">Access control (IAM)</div>
<div class="t" style="left:118.00px;top:377.72px;font-size:21px;color:#ffffff;transform:scaleX(0.9417);">Tags</div>
<div class="t" style="left:117.02px;top:429.82px;font-size:21px;color:#ffffff;transform:scaleX(0.9820);">Diagnose and solve problems</div>
<div class="t" style="left:117.05px;top:480.72px;font-size:21px;color:#ffffff;transform:scaleX(0.9471);">Resource visualizer</div>
<div class="t" style="left:118.00px;top:529.62px;font-size:21px;color:#ffffff;transform:scaleX(0.9671);">Settings</div>
<div class="t" style="left:155.51px;top:582.52px;font-size:21px;color:#ffffff;transform:scaleX(0.9905);">Inbound security rules</div>
<div class="t" style="left:155.51px;top:634.22px;font-size:21px;color:#ffffff;transform:scaleX(0.9946);">Outbound security rules</div>
<div class="t" style="left:155.51px;top:685.52px;font-size:21px;color:#ffffff;transform:scaleX(0.9925);">Network interfaces</div>
<div class="t" style="left:156.50px;top:736.32px;font-size:21px;color:#ffffff;transform:scaleX(0.9431);">Subnets</div>
<div class="t" style="left:155.52px;top:787.22px;font-size:21px;color:#ffffff;transform:scaleX(0.9776);">Properties</div>
<div class="t" style="left:155.57px;top:838.62px;font-size:21px;color:#ffffff;transform:scaleX(0.9333);">Locks</div>
<div class="t" style="left:116.94px;top:887.12px;font-size:21px;color:#ffffff;transform:scaleX(1.0553);">Monitoring</div>
<div class="t" style="left:118.00px;top:938.32px;font-size:21px;color:#ffffff;transform:scaleX(1.0223);">Automation</div>
<div class="t" style="left:116.99px;top:989.02px;font-size:21px;color:#ffffff;transform:scaleX(1.0118);">Help</div>
<div class="t" style="left:554.59px;top:166.42px;font-size:21px;color:#ffffff;transform:scaleX(1.0086);">Move</div>
<div class="t" style="left:701.71px;top:166.52px;font-size:21px;color:#ffffff;transform:scaleX(0.9860);">Delete</div>
<div class="t" style="left:825.78px;top:166.42px;font-size:21px;color:#ffffff;transform:scaleX(0.9213);">Refresh</div>
<div class="t" style="left:957.44px;top:166.52px;font-size:21px;color:#ffffff;transform:scaleX(0.9615);">Give feedback</div>
<div class="t" style="left:539.43px;top:218.52px;font-size:21px;color:#ffffff;font-weight:700;-webkit-text-stroke:0;transform:scaleX(0.8717);">Essentials</div>
<div class="t" style="left:2729.00px;top:219.52px;font-size:21px;color:#479ef5;transform:scaleX(0.9183);">JSON View</div>
<div class="t" style="left:511.03px;top:269.32px;font-size:21px;color:#a19f9d;transform:scaleX(0.9733);">Resource group</div>
<div class="t" style="left:662.30px;top:269.32px;font-size:21px;color:#ffffff;">(</div>
<div class="t" style="left:668.39px;top:269.32px;font-size:21px;color:#479ef5;transform:scaleX(1.0086);">move</div>
<div class="t" style="left:719.80px;top:269.32px;font-size:21px;color:#ffffff;">)</div>
<div class="t" style="left:736.70px;top:269.32px;font-size:21px;color:#ffffff;">:</div>
<div class="t" style="left:750.86px;top:269.32px;font-size:21px;color:#479ef5;transform:scaleX(1.0389);">hb-lab</div>
<div class="t" style="left:511.01px;top:314.62px;font-size:21px;color:#a19f9d;transform:scaleX(0.9882);">Location</div>
<div class="t" style="left:736.70px;top:314.62px;font-size:21px;color:#ffffff;">:</div>
<div class="t" style="left:751.46px;top:314.62px;font-size:21px;color:#ffffff;transform:scaleX(0.9401);">France Central</div>
<div class="t" style="left:512.00px;top:359.32px;font-size:21px;color:#a19f9d;transform:scaleX(0.9810);">Subscription</div>
<div class="t" style="left:631.20px;top:359.32px;font-size:21px;color:#ffffff;">(</div>
<div class="t" style="left:637.29px;top:359.32px;font-size:21px;color:#479ef5;transform:scaleX(1.0146);">move</div>
<div class="t" style="left:689.00px;top:359.32px;font-size:21px;color:#ffffff;">)</div>
<div class="t" style="left:736.70px;top:359.32px;font-size:21px;color:#ffffff;">:</div>
<div class="t" style="left:751.45px;top:359.32px;font-size:21px;color:#479ef5;transform:scaleX(0.9501);">pSevenEnterprise</div>
<div class="t" style="left:511.50px;top:403.52px;font-size:21px;color:#a19f9d;transform:scaleX(0.9787);">Subscription ID</div>
<div class="t" style="left:736.70px;top:403.52px;font-size:21px;color:#ffffff;">:</div>
<div class="t" style="left:750.62px;top:403.52px;font-size:21px;color:#ffffff;transform:scaleX(0.9816);">b628f519-0e58-4601-b054-efbea36ea7a0</div>
<div class="t" style="left:511.50px;top:456.02px;font-size:21px;color:#a19f9d;transform:scaleX(0.9348);">Tags</div>
<div class="t" style="left:560.30px;top:456.02px;font-size:21px;color:#ffffff;">(</div>
<div class="t" style="left:567.10px;top:456.02px;font-size:21px;color:#479ef5;transform:scaleX(1.0022);">edit</div>
<div class="t" style="left:601.80px;top:456.02px;font-size:21px;color:#ffffff;">)</div>
<div class="t" style="left:736.70px;top:456.02px;font-size:21px;color:#ffffff;">:</div>
<div class="t" style="left:751.60px;top:456.02px;font-size:21px;color:#479ef5;transform:scaleX(0.9892);">Add tags</div>
<div class="t" style="left:1712.62px;top:269.52px;font-size:21px;color:#a19f9d;transform:scaleX(0.9751);">Custom security rules</div>
<div class="t" style="left:1920.30px;top:269.52px;font-size:21px;color:#ffffff;">:</div>
<div class="t" style="left:1933.78px;top:269.52px;font-size:21px;color:#ffffff;transform:scaleX(1.0162);">6 inbound, 0 outbound</div>
<div class="t" style="left:1713.60px;top:314.12px;font-size:21px;color:#a19f9d;transform:scaleX(0.9812);">Associated with</div>
<div class="t" style="left:1920.30px;top:314.12px;font-size:21px;color:#ffffff;">:</div>
<div class="t" style="left:1934.80px;top:314.12px;font-size:21px;color:#ffffff;transform:scaleX(0.9757);">0 subnets, 2 network interfaces</div>
<div class="t" style="left:558.52px;top:522.42px;font-size:21px;color:#a19f9d;transform:scaleX(0.9797);">Filter by name</div>
<div class="t" style="left:1031.61px;top:522.62px;font-size:21px;color:#ffffff;transform:scaleX(0.9899);">Port</div>
<div class="t" style="left:1077.63px;top:522.62px;font-size:21px;color:#ffffff;transform:scaleX(1.0746);">==</div>
<div class="t" style="left:1111.30px;top:522.62px;font-size:21px;color:#ffffff;font-weight:700;-webkit-text-stroke:0;transform:scaleX(1.0172);">all</div>
<div class="t" style="left:1206.29px;top:522.62px;font-size:21px;color:#ffffff;transform:scaleX(1.0136);">Protocol</div>
<div class="t" style="left:1291.23px;top:522.62px;font-size:21px;color:#ffffff;transform:scaleX(1.0746);">==</div>
<div class="t" style="left:1325.00px;top:522.62px;font-size:21px;color:#ffffff;font-weight:700;-webkit-text-stroke:0;transform:scaleX(1.0172);">all</div>
<div class="t" style="left:1421.20px;top:522.62px;font-size:21px;color:#ffffff;transform:scaleX(0.9429);">Source</div>
<div class="t" style="left:1490.93px;top:522.62px;font-size:21px;color:#ffffff;transform:scaleX(1.0746);">==</div>
<div class="t" style="left:1524.60px;top:522.62px;font-size:21px;color:#ffffff;font-weight:700;-webkit-text-stroke:0;transform:scaleX(1.0172);">all</div>
<div class="t" style="left:1619.79px;top:522.62px;font-size:21px;color:#ffffff;transform:scaleX(1.0060);">Destination</div>
<div class="t" style="left:1731.53px;top:522.62px;font-size:21px;color:#ffffff;transform:scaleX(1.0746);">==</div>
<div class="t" style="left:1765.80px;top:522.62px;font-size:21px;color:#ffffff;font-weight:700;-webkit-text-stroke:0;transform:scaleX(1.0172);">all</div>
<div class="t" style="left:1862.10px;top:522.62px;font-size:21px;color:#ffffff;transform:scaleX(1.0124);">Action</div>
<div class="t" style="left:1927.83px;top:522.62px;font-size:21px;color:#ffffff;transform:scaleX(1.0746);">==</div>
<div class="t" style="left:1961.50px;top:522.62px;font-size:21px;color:#ffffff;font-weight:700;-webkit-text-stroke:0;transform:scaleX(1.0172);">all</div>
<div class="t" style="left:523.77px;top:577.32px;font-size:21px;color:#ffffff;font-weight:700;-webkit-text-stroke:0;transform:scaleX(0.9322);">Priority</div>
<div class="t" style="left:848.21px;top:577.32px;font-size:21px;color:#ffffff;font-weight:700;-webkit-text-stroke:0;transform:scaleX(0.9907);">Name</div>
<div class="t" style="left:1173.06px;top:577.32px;font-size:21px;color:#ffffff;font-weight:700;-webkit-text-stroke:0;transform:scaleX(0.9437);">Port</div>
<div class="t" style="left:1497.86px;top:577.32px;font-size:21px;color:#ffffff;font-weight:700;-webkit-text-stroke:0;transform:scaleX(0.9420);">Protocol</div>
<div class="t" style="left:1823.30px;top:577.32px;font-size:21px;color:#ffffff;font-weight:700;-webkit-text-stroke:0;transform:scaleX(0.9034);">Source</div>
<div class="t" style="left:2147.25px;top:577.32px;font-size:21px;color:#ffffff;font-weight:700;-webkit-text-stroke:0;transform:scaleX(0.9528);">Destination</div>
<div class="t" style="left:2472.90px;top:577.32px;font-size:21px;color:#ffffff;font-weight:700;-webkit-text-stroke:0;transform:scaleX(0.9349);">Action</div>
<div class="t" style="left:562.17px;top:632.92px;font-size:21px;color:#ffffff;font-weight:700;-webkit-text-stroke:0;transform:scaleX(0.9289);">Inbound Security Rules</div>
<div class="t" style="left:524.35px;top:684.02px;font-size:21px;color:#ffffff;transform:scaleX(0.9481);">1000</div>
<div class="t" style="left:850.60px;top:686.02px;font-size:21px;color:#479ef5;">default-allow-ssh</div>
<div class="t" style="left:1173.33px;top:684.02px;font-size:21px;color:#ffffff;transform:scaleX(0.9687);">22</div>
<div class="t" style="left:1498.60px;top:684.02px;font-size:21px;color:#ffffff;transform:scaleX(0.8489);">TCP</div>
<div class="t" style="left:1824.68px;top:686.02px;font-size:21px;color:#ffffff;transform:scaleX(0.9211);">109.236.71.102,92.255.196.132,9…</div>
<div class="t" style="left:2149.80px;top:686.02px;font-size:21px;color:#ffffff;transform:scaleX(0.9513);">Any</div>
<div class="t" style="left:2505.50px;top:684.02px;font-size:21px;color:#ffffff;transform:scaleX(0.9742);">Allow</div>
<div class="t" style="left:524.35px;top:734.60px;font-size:21px;color:#ffffff;transform:scaleX(0.9481);">1010</div>
<div class="t" style="left:850.60px;top:736.60px;font-size:21px;color:#479ef5;transform:scaleX(0.9898);">AllowAnyCustom4444Inbound</div>
<div class="t" style="left:1174.30px;top:734.60px;font-size:21px;color:#ffffff;transform:scaleX(0.9354);">4444</div>
<div class="t" style="left:1498.60px;top:734.60px;font-size:21px;color:#ffffff;transform:scaleX(0.9513);">Any</div>
<div class="t" style="left:1824.68px;top:736.60px;font-size:21px;color:#ffffff;transform:scaleX(0.9211);">109.236.71.102,92.255.196.132,9…</div>
<div class="t" style="left:2149.80px;top:736.60px;font-size:21px;color:#ffffff;transform:scaleX(0.9513);">Any</div>
<div class="t" style="left:2505.50px;top:734.60px;font-size:21px;color:#ffffff;transform:scaleX(0.9742);">Allow</div>
<div class="t" style="left:524.35px;top:785.18px;font-size:21px;color:#ffffff;transform:scaleX(0.9481);">1020</div>
<div class="t" style="left:850.60px;top:787.18px;font-size:21px;color:#479ef5;transform:scaleX(0.9859);">AllowCidrBlockCustom80Inbound</div>
<div class="t" style="left:1174.30px;top:785.18px;font-size:21px;color:#ffffff;transform:scaleX(0.9480);">80</div>
<div class="t" style="left:1498.60px;top:785.18px;font-size:21px;color:#ffffff;transform:scaleX(0.9513);">Any</div>
<div class="t" style="left:1824.68px;top:787.18px;font-size:21px;color:#ffffff;transform:scaleX(0.9211);">109.236.71.102,92.255.196.132,9…</div>
<div class="t" style="left:2149.80px;top:787.18px;font-size:21px;color:#ffffff;transform:scaleX(0.9513);">Any</div>
<div class="t" style="left:2505.50px;top:785.18px;font-size:21px;color:#ffffff;transform:scaleX(0.9742);">Allow</div>
<div class="t" style="left:524.35px;top:835.76px;font-size:21px;color:#ffffff;transform:scaleX(0.9481);">1030</div>
<div class="t" style="left:850.60px;top:837.76px;font-size:21px;color:#479ef5;transform:scaleX(0.9758);">AllowMSKOfficeCidrPort80</div>
<div class="t" style="left:1174.30px;top:835.76px;font-size:21px;color:#ffffff;transform:scaleX(0.9480);">80</div>
<div class="t" style="left:1498.60px;top:835.76px;font-size:21px;color:#ffffff;transform:scaleX(0.9513);">Any</div>
<div class="t" style="left:1824.65px;top:837.76px;font-size:21px;color:#ffffff;transform:scaleX(0.9542);">109.236.71.96/29</div>
<div class="t" style="left:2149.80px;top:837.76px;font-size:21px;color:#ffffff;transform:scaleX(0.9513);">Any</div>
<div class="t" style="left:2505.50px;top:835.76px;font-size:21px;color:#ffffff;transform:scaleX(0.9742);">Allow</div>
<div class="t" style="left:524.35px;top:886.34px;font-size:21px;color:#ffffff;transform:scaleX(0.9481);">1040</div>
<div class="t" style="left:850.60px;top:888.34px;font-size:21px;color:#479ef5;transform:scaleX(0.9682);">AllowRegistryCustom5000Inbou…</div>
<div class="t" style="left:1174.30px;top:886.34px;font-size:21px;color:#ffffff;transform:scaleX(0.9666);">5000</div>
<div class="t" style="left:1498.60px;top:886.34px;font-size:21px;color:#ffffff;transform:scaleX(0.8489);">TCP</div>
<div class="t" style="left:1825.60px;top:888.34px;font-size:21px;color:#ffffff;transform:scaleX(0.9257);">92.255.196.132</div>
<div class="t" style="left:2149.80px;top:888.34px;font-size:21px;color:#ffffff;transform:scaleX(0.9513);">Any</div>
<div class="t" style="left:2505.50px;top:886.34px;font-size:21px;color:#ffffff;transform:scaleX(0.9742);">Allow</div>
<div class="t" style="left:524.35px;top:936.92px;font-size:21px;color:#ffffff;transform:scaleX(0.9481);">1050</div>
<div class="t" style="left:850.60px;top:938.92px;font-size:21px;color:#479ef5;transform:scaleX(0.9648);">AllowOpenVPNCustom31194In…</div>
<div class="t" style="left:1174.30px;top:936.92px;font-size:21px;color:#ffffff;transform:scaleX(0.9587);">31194</div>
<div class="t" style="left:1497.65px;top:936.92px;font-size:21px;color:#ffffff;transform:scaleX(0.9497);">UDP</div>
<div class="t" style="left:1825.60px;top:938.92px;font-size:21px;color:#ffffff;transform:scaleX(0.9257);">92.255.196.132</div>
<div class="t" style="left:2149.80px;top:938.92px;font-size:21px;color:#ffffff;transform:scaleX(0.9513);">Any</div>
<div class="t" style="left:2505.50px;top:936.92px;font-size:21px;color:#ffffff;transform:scaleX(0.9742);">Allow</div>
<div class="t" style="left:524.33px;top:987.50px;font-size:21px;color:#d6d5d4;transform:scaleX(0.9733);">65000</div>
<div class="t" style="left:850.60px;top:989.50px;font-size:21px;color:#d6d5d4;transform:scaleX(0.9945);">AllowVnetInBound</div>
<div class="t" style="left:1174.30px;top:987.50px;font-size:21px;color:#d6d5d4;transform:scaleX(0.9513);">Any</div>
<div class="t" style="left:1498.60px;top:987.50px;font-size:21px;color:#d6d5d4;transform:scaleX(0.9513);">Any</div>
<div class="t" style="left:1825.60px;top:989.50px;font-size:21px;color:#d6d5d4;transform:scaleX(1.0061);">VirtualNetwork</div>
<div class="t" style="left:2149.80px;top:989.50px;font-size:21px;color:#d6d5d4;transform:scaleX(1.0061);">VirtualNetwork</div>
<div class="t" style="left:2505.50px;top:987.50px;font-size:21px;color:#d6d5d4;transform:scaleX(0.9742);">Allow</div>
<div class="t" style="left:524.33px;top:1038.08px;font-size:21px;color:#d6d5d4;transform:scaleX(0.9697);">65001</div>
<div class="t" style="left:850.60px;top:1040.08px;font-size:21px;color:#d6d5d4;transform:scaleX(0.9680);">AllowAzureLoadBalancerInBound</div>
<div class="t" style="left:1174.30px;top:1038.08px;font-size:21px;color:#d6d5d4;transform:scaleX(0.9513);">Any</div>
<div class="t" style="left:1498.60px;top:1038.08px;font-size:21px;color:#d6d5d4;transform:scaleX(0.9513);">Any</div>
<div class="t" style="left:1825.60px;top:1040.08px;font-size:21px;color:#d6d5d4;transform:scaleX(0.9454);">AzureLoadBalancer</div>
<div class="t" style="left:2149.80px;top:1040.08px;font-size:21px;color:#d6d5d4;transform:scaleX(0.9513);">Any</div>
<div class="t" style="left:2505.50px;top:1038.08px;font-size:21px;color:#d6d5d4;transform:scaleX(0.9742);">Allow</div>
<div class="t" style="left:524.34px;top:1088.66px;font-size:21px;color:#d6d5d4;transform:scaleX(0.9627);">65500</div>
<div class="t" style="left:849.61px;top:1090.66px;font-size:21px;color:#d6d5d4;transform:scaleX(0.9885);">DenyAllInBound</div>
<div class="t" style="left:1174.30px;top:1088.66px;font-size:21px;color:#d6d5d4;transform:scaleX(0.9513);">Any</div>
<div class="t" style="left:1498.60px;top:1088.66px;font-size:21px;color:#d6d5d4;transform:scaleX(0.9513);">Any</div>
<div class="t" style="left:1825.60px;top:1090.66px;font-size:21px;color:#d6d5d4;transform:scaleX(0.9513);">Any</div>
<div class="t" style="left:2149.80px;top:1090.66px;font-size:21px;color:#d6d5d4;transform:scaleX(0.9513);">Any</div>
<div class="t" style="left:2504.55px;top:1088.66px;font-size:21px;color:#d6d5d4;transform:scaleX(0.9459);">Deny</div>
<div class="t" style="left:562.40px;top:1139.82px;font-size:21px;color:#ffffff;font-weight:700;-webkit-text-stroke:0;transform:scaleX(0.9306);">Outbound Security Rules</div>
<div class="t" style="left:524.33px;top:1189.82px;font-size:21px;color:#d6d5d4;transform:scaleX(0.9733);">65000</div>
<div class="t" style="left:850.60px;top:1191.82px;font-size:21px;color:#d6d5d4;transform:scaleX(0.9975);">AllowVnetOutBound</div>
<div class="t" style="left:1174.30px;top:1189.82px;font-size:21px;color:#d6d5d4;transform:scaleX(0.9513);">Any</div>
<div class="t" style="left:1498.60px;top:1189.82px;font-size:21px;color:#d6d5d4;transform:scaleX(0.9513);">Any</div>
<div class="t" style="left:1825.60px;top:1191.82px;font-size:21px;color:#d6d5d4;transform:scaleX(1.0061);">VirtualNetwork</div>
<div class="t" style="left:2149.80px;top:1191.82px;font-size:21px;color:#d6d5d4;transform:scaleX(1.0061);">VirtualNetwork</div>
<div class="t" style="left:2505.50px;top:1189.82px;font-size:21px;color:#d6d5d4;transform:scaleX(0.9742);">Allow</div>
<div class="t" style="left:524.33px;top:1240.40px;font-size:21px;color:#d6d5d4;transform:scaleX(0.9697);">65001</div>
<div class="t" style="left:850.60px;top:1242.40px;font-size:21px;color:#d6d5d4;transform:scaleX(1.0024);">AllowInternetOutBound</div>
<div class="t" style="left:1174.30px;top:1240.40px;font-size:21px;color:#d6d5d4;transform:scaleX(0.9513);">Any</div>
<div class="t" style="left:1498.60px;top:1240.40px;font-size:21px;color:#d6d5d4;transform:scaleX(0.9513);">Any</div>
<div class="t" style="left:1825.60px;top:1242.40px;font-size:21px;color:#d6d5d4;transform:scaleX(0.9513);">Any</div>
<div class="t" style="left:2148.78px;top:1242.40px;font-size:21px;color:#d6d5d4;transform:scaleX(1.0159);">Internet</div>
<div class="t" style="left:2505.50px;top:1240.40px;font-size:21px;color:#d6d5d4;transform:scaleX(0.9742);">Allow</div>
<div class="t" style="left:524.34px;top:1290.98px;font-size:21px;color:#d6d5d4;transform:scaleX(0.9627);">65500</div>
<div class="t" style="left:849.61px;top:1292.98px;font-size:21px;color:#d6d5d4;transform:scaleX(0.9948);">DenyAllOutBound</div>
<div class="t" style="left:1174.30px;top:1290.98px;font-size:21px;color:#d6d5d4;transform:scaleX(0.9513);">Any</div>
<div class="t" style="left:1498.60px;top:1290.98px;font-size:21px;color:#d6d5d4;transform:scaleX(0.9513);">Any</div>
<div class="t" style="left:1825.60px;top:1292.98px;font-size:21px;color:#d6d5d4;transform:scaleX(0.9513);">Any</div>
<div class="t" style="left:2149.80px;top:1292.98px;font-size:21px;color:#d6d5d4;transform:scaleX(0.9513);">Any</div>
<div class="t" style="left:2504.55px;top:1290.98px;font-size:21px;color:#d6d5d4;transform:scaleX(0.9459);">Deny</div>
</body></html>
